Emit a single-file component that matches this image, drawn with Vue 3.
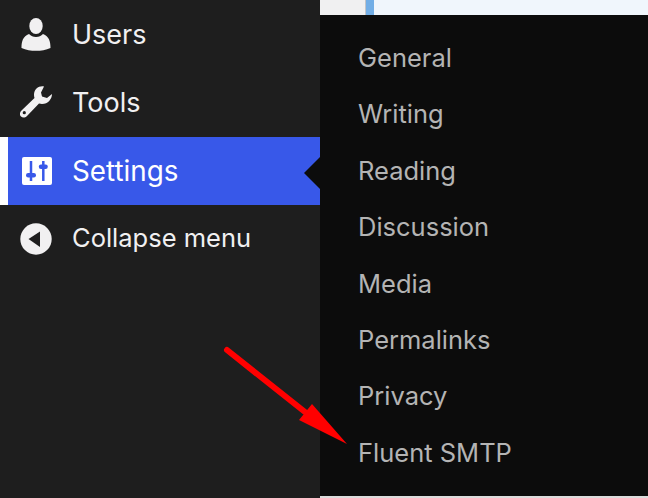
<script setup>
const subItems = ["General", "Writing", "Reading", "Discussion", "Media", "Permalinks", "Privacy", "Fluent SMTP"];
</script>

<template>
  <div class="page">
    <aside class="sidebar">
      <div class="row users">
        <svg class="icon" viewBox="0 0 32 33" width="32" height="33">
          <ellipse cx="16" cy="8" rx="6.700" ry="8" fill="#f1f0f1"/>
          <path d="M1.500 30C1.500 23 3 18.500 9 16C11 18 13 19 16 19C19 19 21 18 23 16C29 18.500 30.500 23 30.500 30C26 32 21 32.800 16 32.800C11 32.800 6 32 1.500 30Z" fill="#f1f0f1"/>
        </svg>
        <span>Users</span>
      </div>
      <div class="row tools">
        <svg class="icon" viewBox="0 0 32 32" width="32" height="32">
          <path d="M24 .5C19-.5 14 3 14 9c0 1 .2 2 .5 3L1.500 24.500c-2 2-2 4.500-.5 6 1.500 1.500 4 1.500 6-.5L19 17.500c1 .3 2 .5 3 .5 6 0 10-5 10-10l-5 4-5-1.500-1-4z" fill="#f1f0f1"/>
          <circle cx="4.300" cy="26.700" r="1.600" fill="#1e1e1e"/>
        </svg>
        <span>Tools</span>
      </div>
      <div class="row settings">
        <svg class="icon" viewBox="0 0 30 28" width="30" height="28">
          <rect width="30" height="28" rx="2" fill="#fff"/>
          <path d="M9 4v20M21.300 4v20" stroke="#3858e9" stroke-width="2.500" fill="none"/>
          <rect x="4" y="16" width="10" height="4.400" rx="2.200" fill="#3858e9"/>
          <rect x="16.800" y="7.500" width="9" height="4.400" rx="2.200" fill="#3858e9"/>
        </svg>
        <span>Settings</span>
      </div>
      <div class="row collapse">
        <svg class="icon" viewBox="0 0 32 32" width="32" height="32">
          <circle cx="16" cy="16" r="15.700" fill="#f1f0f1"/>
          <path d="M20 8.500v15.500L8.500 16z" fill="#1e1e1e"/>
        </svg>
        <span>Collapse menu</span>
      </div>
    </aside>

    <main class="content">
      <div class="top">
        <div class="top-left"></div>
        <div class="top-notice"></div>
      </div>
      <ul class="submenu">
        <li v-for="item in subItems" :key="item">{{ item }}</li>
      </ul>
      <div class="bottom"></div>
    </main>

    <div class="notch"></div>

    <svg class="arrow" viewBox="0 0 130 112" width="130" height="112">
      <path d="M5 6 L83 68" stroke="#ff0000" stroke-width="6" stroke-linecap="round" fill="none"/>
      <path d="M125 100 L77 76 L90 60 Z" fill="#ff0000"/>
    </svg>
  </div>
</template>

<style scoped>
.page {
  position: relative;
  display: flex;
  width: 648px;
  height: 498px;
  overflow: hidden;
  font-family: Inter, "Liberation Sans", sans-serif;
  background: #1e1e1e;
}

.sidebar {
  flex: 0 0 320px;
  display: flex;
  flex-direction: column;
  background: #1e1e1e;
  color: #f1f0f1;
  font-size: 27px;
}

.row {
  display: flex;
  align-items: center;
  box-sizing: border-box;
  height: 68px;
  padding-left: 20px;
}

.row span {
  margin-left: 20px;
}

.users {
  height: 69px;
}

.tools {
  padding-bottom: 2px;
}

.settings {
  padding-left: 14px;
  border-left: 8px solid #fff;
  background: #3858e9;
  color: #fff;
  font-size: 27.800px;
}

.collapse {
  height: 66px;
  padding-top: 2px;
  font-size: 25.500px;
}

.collapse span {
  margin-bottom: 4px;
}

.content {
  flex: 1;
  display: flex;
  flex-direction: column;
}

.top {
  display: flex;
  height: 15px;
}

.top-left {
  width: 45px;
  background: #f0f0f1;
  border-right: 1px solid #c3c4c7;
}

.top-notice {
  flex: 1;
  background: #f0f6fc;
  border-left: 8px solid #72aee6;
}

.submenu {
  flex: 1;
  margin: 0;
  padding: 15px 0 0 38px;
  list-style: none;
  background: #0c0c0c;
  color: #b4b4b4;
  font-size: 25.500px;
}

.submenu li {
  height: 56.400px;
  line-height: 56.400px;
}

.bottom {
  height: 2px;
  background: #dcdcdc;
}

.notch {
  position: absolute;
  left: 304px;
  top: 157px;
  width: 0;
  height: 0;
  border-top: 16px solid transparent;
  border-bottom: 16px solid transparent;
  border-right: 16px solid #0c0c0c;
}

.arrow {
  position: absolute;
  left: 222px;
  top: 344px;
}
</style>
